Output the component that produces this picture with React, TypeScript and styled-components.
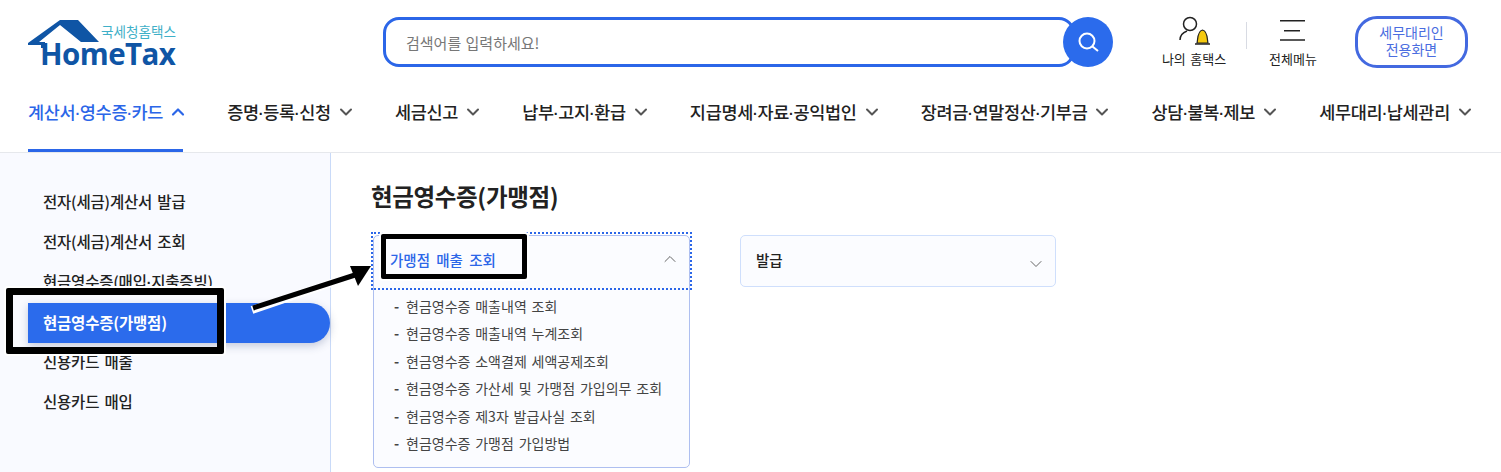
import React from "react";
import styled, { createGlobalStyle } from "styled-components";
import { ChevronDown, ChevronUp } from "lucide-react";

const Global = createGlobalStyle`
	html, body {
		margin: 0;
		padding: 0;
		background: #fff;
		font-family: "Noto Sans CJK KR", "Noto Sans", sans-serif;
	}
`;

const Page = styled.div`
	width: 1501px;
	height: 472px;
	overflow: hidden;
	position: relative;
	background: #fff;
`;

const TopBar = styled.header`
	height: 84px;
	display: flex;
	align-items: flex-start;
	padding: 16px 33px 0 28px;
	box-sizing: border-box;
`;

const Logo = styled.div`
	width: 150px;
	height: 52px;
	position: relative;
	flex: none;
`;

const LogoRoof = styled.svg`
	position: absolute;
	left: 0;
	top: 0;
`;

const LogoSub = styled.span`
	position: absolute;
	left: 73px;
	top: 7px;
	font-size: 13.6px;
	line-height: 16px;
	color: #3fb0c8;
	white-space: nowrap;
`;

const LogoName = styled.span`
	position: absolute;
	left: 12px;
	top: 27px;
	font: 700 29.5px/22px "Open Sans", sans-serif;
	letter-spacing: -0.55px;
	color: #0f55a5;
	white-space: nowrap;
`;

const SearchWrap = styled.div`
	margin-left: 205px;
	margin-top: 1px;
	width: 730px;
	height: 50px;
	display: flex;
	align-items: center;
	flex: none;
`;

const SearchBox = styled.div`
	width: 692px;
	height: 50px;
	box-sizing: border-box;
	border: 3px solid #2b66e8;
	border-radius: 16px;
	padding-left: 20px;
	font-size: 15px;
	word-spacing: 1px;
	color: #777;
	display: flex;
	align-items: center;
`;

const SearchButton = styled.div`
	width: 50px;
	height: 50px;
	margin-left: -12px;
	border-radius: 50%;
	background: #2b6bec;
	display: flex;
	align-items: center;
	justify-content: center;
	flex: none;
`;

const Tools = styled.div`
	display: flex;
	align-items: flex-start;
	margin-left: 36px;
`;

const ToolItem = styled.div`
	display: flex;
	flex-direction: column;
	align-items: center;
	width: 90px;
	font-size: 13px;
	word-spacing: 1.5px;
	line-height: 16px;
	color: #222;
	white-space: nowrap;
	svg {
		display: block;
		height: 34px;
		margin-bottom: 1px;
	}
`;

const ToolDivider = styled.div`
	width: 1px;
	height: 27px;
	background: #d8dbe3;
	margin: 6px 1px 0 7px;
`;

const AgentButton = styled.div`
	margin-left: 17px;
	width: 113px;
	height: 52px;
	box-sizing: border-box;
	border: 3px solid #4369e0;
	border-radius: 22px;
	padding-bottom: 3px;
	font-size: 14px;
	line-height: 17px;
	color: #4a6de0;
	display: flex;
	align-items: center;
	justify-content: center;
	text-align: center;
`;

const Nav = styled.nav`
	height: 69px;
	display: flex;
	justify-content: space-between;
	padding: 0 31px 0 28px;
	box-sizing: border-box;
	border-bottom: 1px solid #e6e8ec;
`;

const NavItem = styled.div<{ $active?: boolean }>`
	display: flex;
	align-items: flex-start;
	gap: 5px;
	height: 68px;
	padding-top: 16px;
	box-sizing: border-box;
	font-size: 17.5px;
	line-height: 24px;
	font-weight: 500;
	letter-spacing: -0.3px;
	white-space: nowrap;
	color: ${({ $active }) => ($active ? "#2b66e8" : "#222")};
	border-bottom: 3px solid ${({ $active }) => ($active ? "#2b66e8" : "transparent")};
	svg {
		margin: 2px -5px 0 0;
		color: ${({ $active }) => ($active ? "#2b66e8" : "#555")};
	}
`;

const Dot = styled.span`
	font-family: "Liberation Sans", sans-serif;
	font-weight: 700;
	font-size: 14px;
`;

const Body = styled.div`
	display: flex;
	height: 319px;
`;

const Side = styled.aside`
	width: 331px;
	box-sizing: border-box;
	flex: none;
	background: #f9faff;
	border-right: 1px solid #c9daf8;
	padding: 29px 0 0 0;
`;

const SideItem = styled.div<{ $active?: boolean }>`
	height: 40px;
	line-height: ${({ $active }) => ($active ? "38px" : "39px")};
	font-size: 15.5px;
	word-spacing: 2px;
	font-weight: ${({ $active }) => ($active ? 700 : 500)};
	letter-spacing: -0.2px;
	color: ${({ $active }) => ($active ? "#fff" : "#222")};
	background: ${({ $active }) => ($active ? "#2b6bec" : "transparent")};
	border-radius: ${({ $active }) => ($active ? "0 20px 20px 0" : "0")};
	box-shadow: ${({ $active }) => ($active ? "0 3px 8px rgba(40,60,110,.25)" : "none")};
	margin: ${({ $active }) => ($active ? "1px 0 -1px 28px" : "0")};
	padding-left: ${({ $active }) => ($active ? "15px" : "43px")};
`;

const Main = styled.main`
	flex: 1;
	padding: 27px 0 0 40px;
`;

const Title = styled.h2`
	margin: 0 0 22px;
	font-size: 23.5px;
	line-height: 33px;
	font-weight: 700;
	letter-spacing: -0.35px;
	color: #222;
`;

const Groups = styled.div`
	display: flex;
	align-items: flex-start;
	gap: 50px;
`;

const Group = styled.div<{ $open?: boolean }>`
	width: ${({ $open }) => ($open ? "317px" : "316px")};
	box-sizing: border-box;
	margin-left: ${({ $open }) => ($open ? "2px" : "0")};
	border: 1px solid ${({ $open }) => ($open ? "#aebff0" : "#cfdffc")};
	border-radius: 5px;
	background: #fbfcff;
`;

const GroupHead = styled.div<{ $open?: boolean }>`
	height: 50px;
	box-sizing: border-box;
	display: flex;
	align-items: center;
	justify-content: space-between;
	padding: 0 9px 4px ${({ $open }) => ($open ? "16px" : "15px")};
	font-size: 14.5px;
	word-spacing: 3px;
	font-weight: 500;
	color: ${({ $open }) => ($open ? "#2b66e8" : "#222")};
	svg {
		color: #666;
		margin-top: ${({ $open }) => ($open ? "0" : "9px")};
	}
`;

const SubList = styled.ul`
	margin: 0;
	padding: 7px 0 10px 20px;
	list-style: none;
`;

const SubItem = styled.li`
	height: 27.4px;
	line-height: 27.4px;
	font-size: 14px;
	word-spacing: 1.7px;
	color: #444;
	white-space: nowrap;
	&::before {
		content: "-";
		display: inline-block;
		width: 12px;
		font-weight: 700;
	}
`;

const Focus = styled.div`
	position: absolute;
	left: 371px;
	top: 232px;
	width: 321px;
	height: 58px;
	box-sizing: border-box;
	border: 2px dotted #2b66e8;
`;

const Callout = styled.div<{ $x: number; $y: number; $w: number; $h: number; $b: number }>`
	position: absolute;
	left: ${({ $x }) => $x}px;
	top: ${({ $y }) => $y}px;
	width: ${({ $w }) => $w}px;
	height: ${({ $h }) => $h}px;
	box-sizing: border-box;
	border: ${({ $b }) => $b}px solid #000;
	border-radius: 2px;
	box-shadow: 0 0 0 2px #fff;
`;

const Arrow = styled.svg`
	position: absolute;
	left: 245px;
	top: 260px;
`;

const navItems = [
	"증명·등록·신청",
	"세금신고",
	"납부·고지·환급",
	"지급명세·자료·공익법인",
	"장려금·연말정산·기부금",
	"상담·불복·제보",
	"세무대리·납세관리",
];

const sideItems = [
	"전자(세금)계산서 발급",
	"전자(세금)계산서 조회",
	"현금영수증(매입·지출증빙)",
	"현금영수증(가맹점)",
	"신용카드 매출",
	"신용카드 매입",
];

const subItems = [
	"현금영수증 매출내역 조회",
	"현금영수증 매출내역 누계조회",
	"현금영수증 소액결제 세액공제조회",
	"현금영수증 가산세 및 가맹점 가입의무 조회",
	"현금영수증 제3자 발급사실 조회",
	"현금영수증 가맹점 가입방법",
];

// the labels have much tighter middots than the CJK font gives
const dotted = (label: string) =>
	label.split("·").map((part, i) => (
		<React.Fragment key={part}>
			{i > 0 && <Dot>·</Dot>}
			{part}
		</React.Fragment>
	));

const App = () => (
	<Page>
		<Global />
		<TopBar>
			<Logo>
				<LogoRoof width="76" height="32" viewBox="0 0 76 32">
					<path
						d="M0 27 L32 4 H50 L71 26 H53 L32 9 L11 26 H17 V32 H13 V29 H0 Z"
						fill="#0f55a5"
					/>
				</LogoRoof>
				<LogoSub>국세청홈택스</LogoSub>
				<LogoName>HomeTax</LogoName>
			</Logo>
			<SearchWrap>
				<SearchBox>검색어를 입력하세요!</SearchBox>
				<SearchButton>
					<svg width="24" height="24" viewBox="0 0 24 24" fill="none" stroke="#fff" strokeWidth="2">
						<circle cx="11" cy="11" r="7.5" />
						<path d="M16.5 16.5 L22 21" />
					</svg>
				</SearchButton>
			</SearchWrap>
			<Tools>
				<ToolItem>
					<svg width="34" height="34" viewBox="0 0 34 34" fill="none">
						<circle cx="13" cy="8" r="6.5" stroke="#222" strokeWidth="1.5" />
						<path d="M3 24 C3 19 6 16.5 10 15" stroke="#222" strokeWidth="1.5" />
						<path d="M20 27 C21 24 20 15 25.5 14 C31 15 30 24 31 27 Z" fill="#f5c90f" stroke="#222" strokeWidth="1.2" />
						<path d="M18 28 H33" stroke="#222" strokeWidth="1.5" />
					</svg>
					나의 홈택스
				</ToolItem>
				<ToolDivider />
				<ToolItem>
					<svg width="26" height="34" viewBox="0 0 26 34" fill="none" stroke="#222" strokeWidth="1.6">
						<path d="M0 4.7 H25 M4 14.7 H20 M0 24 H25" />
					</svg>
					전체메뉴
				</ToolItem>
				<AgentButton>
					세무대리인
					<br />
					전용화면
				</AgentButton>
			</Tools>
		</TopBar>
		<Nav>
			<NavItem $active>
				<span>{dotted("계산서·영수증·카드")}</span>
				<ChevronUp size={20} strokeWidth={2.6} />
			</NavItem>
			{navItems.map((item) => (
				<NavItem key={item}>
					<span>{dotted(item)}</span>
					<ChevronDown size={20} strokeWidth={2.4} />
				</NavItem>
			))}
		</Nav>
		<Body>
			<Side>
				{sideItems.map((item, i) => (
					<SideItem key={item} $active={i === 3}>
						{dotted(item)}
					</SideItem>
				))}
			</Side>
			<Main>
				<Title>현금영수증(가맹점)</Title>
				<Groups>
					<Group $open>
						<GroupHead $open>
							가맹점 매출 조회
							<ChevronUp size={20} strokeWidth={1.2} />
						</GroupHead>
						<SubList>
							{subItems.map((item) => (
								<SubItem key={item}>{item}</SubItem>
							))}
						</SubList>
					</Group>
					<Group>
						<GroupHead>
							발급
							<ChevronDown size={20} strokeWidth={1.2} />
						</GroupHead>
					</Group>
				</Groups>
			</Main>
		</Body>
		<Focus />
		<Callout $x={6} $y={288} $w={218} $h={66} $b={7} />
		<Callout $x={381} $y={234} $w={146} $h={45} $b={5} />
		<Arrow width="130" height="55" viewBox="0 0 130 55">
			<path d="M7 50 L110 15" stroke="#fff" strokeWidth="8" />
			<path d="M8 48 L110 15" stroke="#000" strokeWidth="5" />
			<path d="M126 6 L113 26 L105 6 Z" fill="#000" />
		</Arrow>
	</Page>
);

export default App;
